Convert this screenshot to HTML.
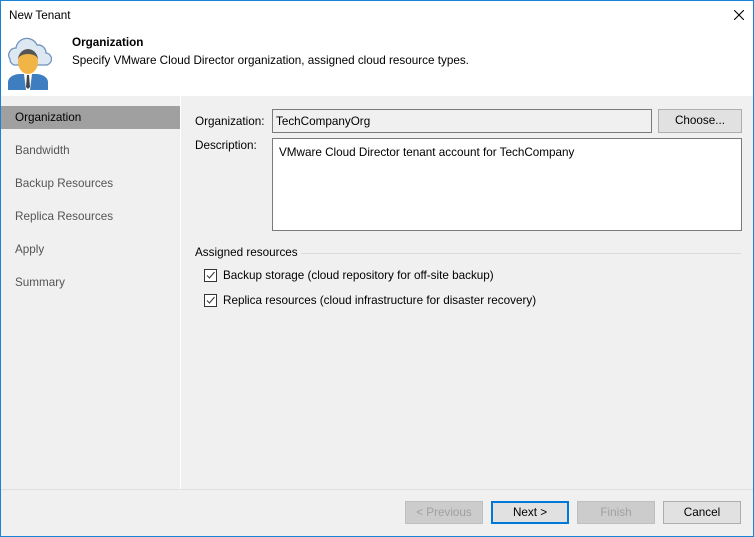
<!DOCTYPE html><html><head><style>
body{margin:0;width:754px;height:537px;overflow:hidden;font-family:"Liberation Sans",sans-serif;font-size:11.7px;color:#000;}
.win{position:absolute;left:0;top:0;width:752px;height:535px;border:1px solid #1883d7;background:#f0f0f0;}
.hdr{position:absolute;left:0;top:0;width:752px;height:95px;background:#fff;}
.a{position:absolute;white-space:nowrap;}
.nav{position:absolute;left:0;top:95px;width:179px;height:393px;background:#f0f0f0;border-right:1px solid #fff;}
.nav div{position:absolute;left:14px;color:#555;}
.btn{position:absolute;top:500px;width:76px;height:21px;border:1px solid #adadad;background:#e1e1e1;text-align:center;line-height:21px;}
.cb{position:absolute;left:203px;width:11px;height:11px;border:1px solid #333;background:#fff;}
</style></head><body><div class="win">
<div class="hdr">
<div class="a" style="left:8px;top:8px;">New Tenant</div>
<svg class="a" style="left:5px;top:32px" width="46" height="58" viewBox="0 0 46 58">
<path d="M4 26 a7 7 0 0 1 6-11 a11 11 0 0 1 21-3 a8 8 0 0 1 9 8 a6 6 0 0 1 -1 12 H8 a6 6 0 0 1 -4-6z" fill="#dde8f3" stroke="#6f93be" stroke-width="1.3"/>
<path d="M2 57 v-8 a12 8 0 0 1 12-8 h16 a12 8 0 0 1 12 8 v8z" fill="#3d7dc0"/>
<path d="M18 41 h8 l-2 16 h-4z" fill="#fff"/><path d="M21 42 h2 l1 12 -2 2 -2-2z" fill="#444"/>
<ellipse cx="22" cy="29" rx="10" ry="12" fill="#f1b546"/>
<path d="M12 27 a10 11 0 0 1 20 0 a10 6 0 0 0 -20 0z" fill="#555"/>
</svg>
<div class="a" style="left:71px;top:35px;font-weight:bold;">Organization</div>
<div class="a" style="left:71px;top:53px;">Specify VMware Cloud Director organization, assigned cloud resource types.</div>
<svg class="a" style="left:733px;top:9px" width="10" height="10"><path d="M0 0L10 10M10 0L0 10" stroke="#000" stroke-width="1.1"/></svg>
</div>
<div class="nav">
<div style="left:0;top:10px;width:179px;height:23px;background:#a0a0a0;"></div>
<div style="top:15px;color:#000;">Organization</div>
<div style="top:48px;">Bandwidth</div>
<div style="top:81px;">Backup Resources</div>
<div style="top:114px;">Replica Resources</div>
<div style="top:147px;">Apply</div>
<div style="top:180px;">Summary</div>
</div>
<div class="a" style="left:194px;top:114px;">Organization:</div>
<div class="a" style="left:271px;top:108px;width:378px;height:22px;border:1px solid #7a7a7a;background:#f0f0f0;"></div>
<div class="a" style="left:275px;top:114px;">TechCompanyOrg</div>
<div class="btn" style="left:657px;top:108px;width:82px;height:22px;">Choose...</div>
<div class="a" style="left:194px;top:138px;">Description:</div>
<div class="a" style="left:271px;top:137px;width:468px;height:91px;border:1px solid #7a7a7a;background:#fff;"></div>
<div class="a" style="left:278px;top:145px;">VMware Cloud Director tenant account for TechCompany</div>
<div class="a" style="left:194px;top:245px;">Assigned resources</div>
<div class="a" style="left:300px;top:252px;width:440px;height:1px;background:#dcdcdc;"></div>
<div class="cb" style="top:268px;"><svg width="11" height="11"><path d="M2 5.5 l2.5 2.5 l5-6" stroke="#333" fill="none"/></svg></div>
<div class="a" style="left:222px;top:268px;">Backup storage (cloud repository for off-site backup)</div>
<div class="cb" style="top:293px;"><svg width="11" height="11"><path d="M2 5.5 l2.5 2.5 l5-6" stroke="#333" fill="none"/></svg></div>
<div class="a" style="left:222px;top:293px;">Replica resources (cloud infrastructure for disaster recovery)</div>
<div class="a" style="left:0;top:488px;width:752px;height:1px;background:#dfdfdf;"></div>
<div class="btn" style="left:404px;color:#a0a0a0;background:#ccc;border-color:#bfbfbf;">&lt; Previous</div>
<div class="btn" style="left:490px;border:2px solid #0078d7;width:74px;height:19px;line-height:19px;">Next &gt;</div>
<div class="btn" style="left:576px;color:#a0a0a0;background:#ccc;border-color:#bfbfbf;">Finish</div>
<div class="btn" style="left:662px;">Cancel</div>
</div></body></html>
